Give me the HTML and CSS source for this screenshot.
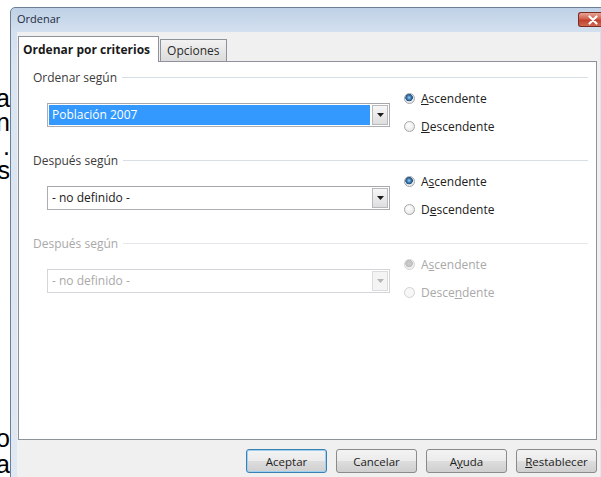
FILE: index.html
```html
<!DOCTYPE html>
<html lang="es">
<head>
<meta charset="utf-8">
<title>Ordenar</title>
<link rel="stylesheet" href="styles.css">
</head>
<body>
  <div class="page-text">
    <div class="ln first"><span>a</span></div>
    <div class="ln"><span>n</span></div>
    <div class="ln"><span>.</span></div>
    <div class="ln"><span>s</span></div>
    <div class="ln low"><span>o</span></div>
    <div class="ln"><span>a</span></div>
  </div>

  <div class="dialog">
    <div class="titlebar">
      <span class="title">Ordenar</span>
      <span class="close">
        <svg width="12" height="10" viewBox="0 0 12 10"><path d="M2.5 1.5 L9.5 8.5 M9.5 1.5 L2.5 8.5" stroke="#fff" stroke-width="2.2" stroke-linecap="round"/></svg>
      </span>
    </div>

    <div class="client">
      <div class="tabs">
        <span class="tab active">Ordenar por criterios</span>
        <span class="tab">Opciones</span>
      </div>

      <div class="panel">
        <div class="group">
          <div class="group-head"><span class="group-label">Ordenar según</span><span class="rule"></span></div>
          <div class="group-body">
            <div class="combo">
              <div class="combo-field"><span class="combo-text selected">Población 2007</span></div>
              <span class="combo-btn"><svg width="7" height="4" viewBox="0 0 7 4"><path d="M0 0 H7 L3.5 4 Z" fill="#1b1b1b"/></svg></span>
            </div>
            <div class="radios">
              <label class="radio"><span class="dot on"></span><span><u>A</u>scendente</span></label>
              <label class="radio"><span class="dot"></span><span><u>D</u>escendente</span></label>
            </div>
          </div>
        </div>

        <div class="group">
          <div class="group-head"><span class="group-label">Después según</span><span class="rule"></span></div>
          <div class="group-body">
            <div class="combo">
              <div class="combo-field"><span class="combo-text">- no definido -</span></div>
              <span class="combo-btn"><svg width="7" height="4" viewBox="0 0 7 4"><path d="M0 0 H7 L3.5 4 Z" fill="#1b1b1b"/></svg></span>
            </div>
            <div class="radios">
              <label class="radio"><span class="dot on"></span><span>A<u>s</u>cendente</span></label>
              <label class="radio"><span class="dot"></span><span>D<u>e</u>scendente</span></label>
            </div>
          </div>
        </div>

        <div class="group disabled">
          <div class="group-head"><span class="group-label">Después según</span><span class="rule"></span></div>
          <div class="group-body">
            <div class="combo">
              <div class="combo-field"><span class="combo-text">- no definido -</span></div>
              <span class="combo-btn"><svg width="7" height="4" viewBox="0 0 7 4"><path d="M0 0 H7 L3.5 4 Z" fill="#b5b5b5"/></svg></span>
            </div>
            <div class="radios">
              <label class="radio"><span class="dot on"></span><span>A<u>s</u>cendente</span></label>
              <label class="radio"><span class="dot"></span><span>Desce<u>n</u>dente</span></label>
            </div>
          </div>
        </div>
      </div>

      <div class="buttons">
        <button class="btn default">Aceptar</button>
        <button class="btn">Cancelar</button>
        <button class="btn">A<u>y</u>uda</button>
        <button class="btn"><u>R</u>establecer</button>
      </div>
    </div>
  </div>
</body>
</html>
```

FILE: styles.css
```css
html, body {
  margin: 0;
  padding: 0;
}

body {
  width: 601px;
  height: 477px;
  overflow: hidden;
  background: #ffffff;
  display: flex;
  align-items: flex-start;
}

/* document text peeking out from behind the dialog */
.page-text {
  width: 10px;
  flex-shrink: 0;
  overflow: hidden;
  font-family: "Liberation Sans", Arial, sans-serif;
  font-size: 25px;
  line-height: 24px;
  color: #000;
}

.ln {
  display: flex;
  justify-content: flex-end;
  white-space: nowrap;
}

.ln.first { margin-top: 86px; }
.ln.low { margin-top: 242px; line-height: 28px; }

/* dialog window */
.dialog {
  flex-shrink: 0;
  margin-top: 7px;
  width: 597px;
  height: 490px;
  box-sizing: border-box;
  border: 1px solid #6d7f94;
  border-radius: 5px 5px 0 0;
  background: linear-gradient(#bfd1e6 0px, #d3e0ef 24px, #dae5f2 60px, #dfe8f3 100%);
  font-family: "Open Sans", "Noto Sans", sans-serif;
  font-size: 12px;
  color: #1e1e1e;
}

.titlebar {
  height: 24px;
  display: flex;
  align-items: flex-start;
  padding-left: 6px;
}

.title {
  margin-top: 3px;
  font-size: 11px;
  color: #1d2b3d;
}

.close {
  margin-left: auto;
  margin-top: 4px;
  width: 28px;
  height: 15px;
  box-sizing: border-box;
  border: 1px solid #7a2b22;
  border-right: 0;
  border-radius: 3px 0 0 3px;
  background: linear-gradient(#e7a596 0%, #d2604d 45%, #c0402c 55%, #d06a52 100%);
  display: flex;
  align-items: center;
  justify-content: center;
}

.client {
  margin: 0 6px;
  padding: 4px 3px 0 1px;
  height: 460px;
  box-sizing: border-box;
  background: #f0f0f0;
}

/* tab strip */
.tabs {
  display: flex;
  align-items: flex-end;
  height: 25px;
  position: relative;
  z-index: 1;
}

.tab {
  height: 22px;
  box-sizing: border-box;
  padding: 2px 6px 0 6px;
  border: 1px solid #8d929b;
  border-bottom: 0;
  background: linear-gradient(#f2f2f2, #dcdcdc);
  color: #2a2a2a;
  margin-left: 1px;
}

.tab.active {
  height: 26px;
  margin-bottom: -1px;
  margin-left: 0;
  padding: 4px 8px 0 4px;
  background: #ffffff;
  font-weight: bold;
  color: #1a1a1a;
}

.panel {
  height: 379px;
  box-sizing: border-box;
  border: 1px solid #8d929b;
  background: #ffffff;
  padding: 8px 8px 0 14px;
}

/* option groups */
.group + .group { margin-top: 17px; }

.group-head {
  height: 14px;
  display: flex;
  align-items: center;
  gap: 5px;
}

.group-label { color: #3b3b3b; }

.rule {
  flex: 1;
  border-top: 1px solid #d5dfe5;
}

.group-body {
  display: flex;
  align-items: center;
  margin-top: 4px;
  padding-left: 14px;
}

.combo {
  width: 343px;
  height: 24px;
  margin-top: 5px;
  box-sizing: border-box;
  display: flex;
  border: 1px solid #abadb3;
  border-top-color: #a4a7ad;
  background: #ffffff;
}

.combo-field {
  flex: 1;
  display: flex;
  padding: 1px;
}

.combo-text {
  flex: 1;
  display: flex;
  align-items: center;
  padding-left: 3px;
  color: #202020;
}

.combo-text.selected {
  background: #3399ff;
  color: #ffffff;
}

.combo-btn {
  width: 16px;
  margin: 1px;
  box-sizing: border-box;
  border: 1px solid #b7b9bd;
  background: linear-gradient(#f7f7f7, #dedede);
  display: flex;
  align-items: center;
  justify-content: center;
}

.radios {
  margin-left: 14px;
  display: flex;
  flex-direction: column;
  gap: 8px;
}

.radio {
  height: 20px;
  display: flex;
  align-items: center;
  gap: 6px;
  color: #202020;
}

.dot {
  width: 11px;
  height: 11px;
  border-radius: 50%;
  box-sizing: border-box;
  border: 1px solid #a4a6a8;
  background: radial-gradient(circle at 40% 35%, #ffffff, #e2e2e2);
}

.dot.on {
  background: radial-gradient(circle at 45% 40%, #a8d0ef 0px, #3d7db3 2px, #1f4f80 3.5px, #e4e8ec 4px, #f6f6f6 100%);
}

/* inactive group */
.disabled .group-label,
.disabled .combo-text,
.disabled .radio { color: #a9a9a9; }

.disabled .rule { border-top-color: #e4e8eb; }

.disabled .combo { border-color: #d3d5d8; }

.disabled .combo-btn {
  border-color: #dcdcdc;
  background: #f4f4f4;
}

.disabled .dot { border-color: #d2d2d2; background: #f7f7f7; }
.disabled .dot.on {
  background: radial-gradient(circle at 45% 40%, #cfcfcf 0px, #bdbdbd 3.5px, #f1f1f1 4px, #f7f7f7 100%);
}

/* dialog buttons */
.buttons {
  margin-top: 9px;
  display: flex;
  justify-content: flex-end;
  gap: 9px;
}

.btn {
  width: 81px;
  height: 24px;
  padding: 0;
  border: 1px solid #8a8a8a;
  border-radius: 3px;
  background: linear-gradient(#f3f3f3 0%, #ebebeb 50%, #dddddd 51%, #cfcfcf 100%);
  font-family: "Open Sans", "Noto Sans", sans-serif;
  font-size: 11.5px;
  color: #1e1e1e;
}

.btn.default {
  border-color: #3c7fb1;
  box-shadow: inset 0 0 0 1px #9ed0f2;
}
```
